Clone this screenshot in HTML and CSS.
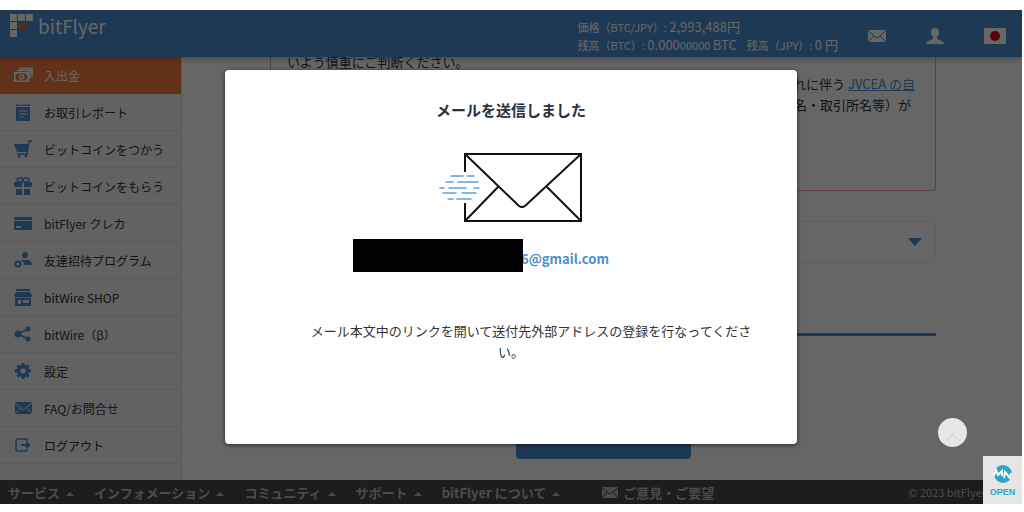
FILE: index.html
```html
<!DOCTYPE html>
<html lang="ja">
<head>
    <meta charset="UTF-8">
    <meta name="viewport" content="width=device-width, initial-scale=1.0">
    <title>bitFlyer</title>
    <link rel="stylesheet" href="styles.css">
</head>
<body>
    <div class="app">
        <header class="header">
            <a class="logo" href="#">
                <svg class="logo-mark" viewBox="0 0 24 24" width="24" height="24">
                    <path fill="#fff" d="M0 0h7v7H0zM8 0h7v7H8zM16 0h7v7h-7zM0 8h7v7H0zM0 16h7v7H0z"/>
                    <circle cx="12" cy="12" r="3.5" fill="#f06a1c"/>
                </svg>
                <span class="logo-text">bitFlyer</span>
            </a>
            <div class="balance">
                <div>価格（BTC/JPY）: <span class="num">2,993,488円</span></div>
                <div>残高（BTC）: <span class="num">0.000</span>00000 <span class="num">BTC</span><span class="jpy">残高（JPY）: <span class="num">0 円</span></span></div>
            </div>
            <nav class="tools">
                <a href="#" aria-label="メール">
                    <svg viewBox="0 0 18 12" width="18" height="12">
                        <rect width="18" height="12" rx="1" fill="#fff"/>
                        <path d="M0 1l9 7 9-7M0 12l6-6M18 12l-6-6" fill="none" stroke="#4a90d0"/>
                    </svg>
                </a>
                <a href="#" aria-label="アカウント">
                    <svg viewBox="0 0 18 16" width="18" height="16">
                        <path fill="#fff" d="M9 0c3 0 4 2 4 5 0 2-1 3-2 4v2l5 2q2 1 2 3H0q0-2 2-3l5-2V9C6 8 5 7 5 5c0-3 1-5 4-5z"/>
                    </svg>
                </a>
                <a href="#" aria-label="日本語">
                    <svg viewBox="0 0 22 16" width="22" height="16">
                        <rect width="22" height="16" fill="#fff"/>
                        <circle cx="11" cy="8" r="5" fill="#e0001b"/>
                    </svg>
                </a>
            </nav>
        </header>

        <div class="body">
            <nav class="sidebar">
                <a class="item active" href="#">
                    <svg class="icon" viewBox="0 0 20 18">
                        <path d="M4 4.500h13v8M6 2.500h13v8" fill="none" stroke="#fff" stroke-width="1.5"/>
                        <rect x="1" y="6" width="15" height="10" fill="#fff"/>
                        <path d="M4 7.500h9q0 1.500 1.500 1.500v4q-1.500 0-1.500 1.500H4q0-1.500-1.500-1.500V9Q4 9 4 7.500z" fill="#f47b43"/>
                        <circle cx="8.500" cy="11" r="2" fill="none" stroke="#fff" stroke-width="1.500"/>
                    </svg>入出金
                </a>
                <a class="item" href="#">
                    <svg class="icon" viewBox="0 0 20 18">
                        <path d="M3 1h1v1h2V1h1v1h2V1h1v1h2V1h1v1h2V1h2v2H3zM3 4h14v14H3z"/>
                        <path d="M6 8h8M6 11h8M6 14h5" stroke="#f4f4f4" fill="none"/>
                    </svg>お取引レポート
                </a>
                <a class="item" href="#">
                    <svg class="icon" viewBox="0 0 20 18">
                        <path d="M1 4h14l-1 8H4z"/>
                        <path d="M19 1h-3l-2 13H4" fill="none" stroke="#4a90d0" stroke-width="1.5"/>
                        <circle cx="6" cy="16" r="1.5"/><circle cx="13" cy="16" r="1.5"/>
                    </svg>ビットコインをつかう
                </a>
                <a class="item" href="#">
                    <svg class="icon" viewBox="0 0 20 18">
                        <path d="M1 6q0-1 1-1h7v5H3q-2 0-2-2zM11 5h7q1 0 1 1v2q0 2-2 2h-6zM3 12h6v6H3zM11 12h6v6h-6z"/>
                        <path d="M10 5Q4 5 4 3t3-2 3 3q0-3 3-3t3 2-6 2z" fill="none" stroke="#4a90d0" stroke-width="1.5"/>
                    </svg>ビットコインをもらう
                </a>
                <a class="item" href="#">
                    <svg class="icon" viewBox="0 0 20 18">
                        <path d="M1 3h18v3H1zM1 7h18v9H1z"/>
                        <path d="M3 13h5" stroke="#f4f4f4" stroke-width="2"/>
                    </svg>bitFlyer クレカ
                </a>
                <a class="item" href="#">
                    <svg class="icon" viewBox="0 0 20 18">
                        <circle cx="12" cy="4" r="3"/>
                        <path d="M9 9h6q4 1 4 5h-8q0-4-3-4z"/>
                        <circle cx="5" cy="13" r="2.5" fill="none" stroke="#4a90d0" stroke-width="2"/>
                    </svg>友達招待プログラム
                </a>
                <a class="item" href="#">
                    <svg class="icon" viewBox="0 0 20 18">
                        <path d="M3 1h14v2H3zM3 4h14l2 4q-1 2-3 1-2 1-3 0-2 1-3 0-2 1-3 0-2 1-3 0-2 1-3-1z"/>
                        <path d="M2 10h16v8H2zM5 12v4h3v-4zM10 12v3h6v-3z" fill-rule="evenodd"/>
                    </svg>bitWire SHOP
                </a>
                <a class="item" href="#">
                    <svg class="icon" viewBox="0 0 20 18">
                        <circle cx="5" cy="9" r="3.5"/><circle cx="15" cy="4" r="2.5"/><circle cx="15" cy="14" r="2.5"/>
                        <path d="M15 4L5 9l10 5" fill="none" stroke="#4a90d0" stroke-width="1.5"/>
                    </svg>bitWire（β）
                </a>
                <a class="item" href="#">
                    <svg class="icon" viewBox="0 0 20 18">
                        <circle cx="10" cy="9" r="4.500" fill="none" stroke="#4a90d0" stroke-width="3.5"/>
                        <path d="M10 1v3M10 14v3M2 9h3M15 9h3M4.300 3.300l2 2M13.700 12.700l2 2M4.300 14.700l2-2M13.700 5.300l2-2" stroke="#4a90d0" stroke-width="3"/>
                    </svg>設定
                </a>
                <a class="item" href="#">
                    <svg class="icon" viewBox="0 0 20 18">
                        <rect x="2" y="3" width="17" height="12"/>
                        <path d="M2 4l8 7 9-7M2 15l5-6M19 15l-5-6" fill="none" stroke="#f4f4f4"/>
                    </svg>FAQ/お問合せ
                </a>
                <a class="item" href="#">
                    <svg class="icon" viewBox="0 0 20 18">
                        <path d="M14 5V4q0-1-1-1H5Q3 3 3 5v8q0 2 2 2h8q1 0 1-1v-1" fill="none" stroke="#4a90d0" stroke-width="1.5"/>
                        <path d="M8 8h5V5l5 4-5 4v-3H8z"/>
                    </svg>ログアウト
                </a>
            </nav>

            <main class="content">
                <section class="notice">
                    <p>いよう慎重にご判断ください。</p>
                    <p class="right">れに伴う <a href="#">JVCEA の自</a></p>
                    <p class="right indent">名・取引所名等）が</p>
                </section>
                <div class="panel">
                    <svg viewBox="0 0 14 8" width="14" height="8"><path d="M0 0h14L7 8z" fill="#4a90d0"/></svg>
                </div>
                <hr class="rule">
                <button class="submit" type="button" aria-label="登録"></button>
            </main>
        </div>

        <footer class="footer">
            <a href="#">サービス<span class="up"></span></a>
            <a href="#">インフォメーション<span class="up"></span></a>
            <a href="#">コミュニティ<span class="up"></span></a>
            <a href="#">サポート<span class="up"></span></a>
            <a href="#">bitFlyer について<span class="up"></span></a>
            <a class="feedback" href="#">
                <svg viewBox="0 0 16 11" width="16" height="11">
                    <rect width="16" height="11" fill="#bbb"/>
                    <path d="M0 1l8 6 8-6M0 11l5-6M16 11l-5-6" fill="none" stroke="#4a4a4a"/>
                </svg>ご意見・ご要望
            </a>
            <small class="copyright">© 2023 bitFlyer</small>
        </footer>

        <div class="overlay">
            <div class="modal" role="dialog" aria-modal="true" aria-labelledby="modal-title">
                <h1 class="modal-title" id="modal-title">メールを送信しました</h1>
                <svg class="mail" viewBox="0 0 144 72" width="144" height="72">
                    <g fill="none" stroke="#111" stroke-width="2">
                        <path d="M26 20V2h116v67H26V51"/>
                        <path d="M26 2l54 52q3 2 6 0l56-52M26 69l33-34M142 69l-34-34"/>
                    </g>
                    <path d="M12 24h12M28 24h7M7 30h7M19 30h20M1 36h4M10 36h17M35 36h5M4 41h13M23 41h14M9 47h5M18 47h14" stroke="#5b9fdb" stroke-width="1.5" stroke-linecap="round"/>
                </svg>
                <p class="address"><span class="mask"></span><span class="domain">6@gmail.com</span></p>
                <p class="message">メール本文中のリンクを開いて送付先外部アドレスの登録を行なってください。</p>
            </div>
        </div>

        <a class="to-top" href="#" aria-label="ページの先頭へ">
            <svg viewBox="0 0 14 10" width="14" height="10"><path d="M1 9l6-7 6 7" fill="none" stroke="#ccc"/></svg>
        </a>
        <a class="mn-badge" href="#">
            <svg viewBox="0 0 20 20" width="20" height="20">
                <circle cx="10" cy="10" r="9" fill="#2fa3c7"/>
                <path d="M1 12l2-6 2 5 4-4v5M11 14l1-6 5 6 1-5" fill="none" stroke="#fff" stroke-width="2"/>
            </svg>
            <span>OPEN</span>
        </a>
    </div>
</body>
</html>
```
FILE: styles.css
```css
* {
    margin: 0;
    padding: 0;
    box-sizing: border-box;
}

body {
    min-height: 100vh;
    padding: 10px 2px 8px 0;
    display: flex;
    flex-direction: column;
    background: #fff;
    color: #333;
    font-family: "Noto Sans CJK JP", "Noto Sans", sans-serif;
    font-size: 13px;
    line-height: 21px;
}

a {
    color: inherit;
    text-decoration: none;
}

svg {
    display: block;
    flex: none;
}

.app {
    position: relative;
    flex: 1;
    display: flex;
    flex-direction: column;
    overflow: hidden;
}

/* header */
.header {
    display: flex;
    height: 47px;
    padding: 0 16px 0 10px;
    background: #4a90d0;
    color: #fff;
    box-shadow: 0 2px 6px rgba(0, 0, 0, 0.3);
    z-index: 1;
}

.logo {
    display: flex;
    gap: 4px;
    padding-top: 4px;
}

.logo-text {
    font-size: 19px;
    line-height: 24px;
}

.balance {
    margin-left: auto;
    padding-top: 8px;
    font-size: 11px;
    line-height: 18px;
    white-space: nowrap;
}

.num {
    font-size: 13px;
}

.jpy {
    margin-left: 10px;
}

.tools {
    display: flex;
    align-items: center;
    gap: 40px;
    margin-left: 30px;
    padding-top: 4px;
}

/* sidebar */
.body {
    flex: 1;
    display: flex;
}

.sidebar {
    flex: none;
    width: 182px;
    background: #f4f4f4;
    border-right: 1px solid #e4e4e4;
}

.item {
    display: flex;
    align-items: center;
    gap: 11px;
    height: 37px;
    padding-left: 13px;
    border-bottom: 1px solid #e4e4e4;
    font-size: 12px;
}

.item.active {
    background: #f47b43;
    border-color: #f47b43;
    color: #fff;
}

.icon {
    width: 20px;
    height: 18px;
    fill: #4a90d0;
}

/* content */
.content {
    flex: 1;
    display: flex;
    flex-direction: column;
    padding: 0 86px 0 88px;
}

.notice {
    height: 134px;
    padding: 0 16px;
    border: 1px solid #f0a0a0;
    border-top: 0;
    border-radius: 0 0 4px 4px;
    color: #2a3042;
}

.notice p {
    line-height: 21px;
    margin-top: -6px;
}

.notice .right {
    margin-top: 0;
    padding-right: 4px;
    text-align: right;
}

.notice .indent {
    padding-right: 8px;
}

.notice p:first-child {
    margin-bottom: 1px;
}

.notice a {
    color: #4a90d0;
    text-decoration: underline;
}

.panel {
    display: flex;
    align-items: center;
    justify-content: flex-end;
    height: 42px;
    margin-top: 30px;
    padding-right: 13px;
    border: 1px solid #eee;
    border-radius: 4px;
}

.rule {
    margin-top: 70px;
    border: 0;
    border-top: 3px solid #4a90d0;
}

.submit {
    align-self: center;
    width: 175px;
    height: 40px;
    margin: 83px 0 21px;
    border: 0;
    border-radius: 4px;
    background: #4a90d0;
}

/* footer */
.footer {
    display: flex;
    align-items: center;
    gap: 20px;
    height: 24px;
    padding-left: 8px;
    background: #4a4a4a;
    color: #bbb;
    font-size: 13px;
    font-weight: bold;
    white-space: nowrap;
}

.footer a {
    display: flex;
    align-items: center;
    gap: 6px;
}

.up {
    margin-top: 4px;
    border: 4px solid transparent;
    border-top: 0;
    border-bottom-color: #bbb;
}

.footer .feedback {
    gap: 5px;
    margin-left: 22px;
}

.copyright {
    margin-left: auto;
    padding-right: 36px;
    font-size: 11px;
    font-weight: normal;
}

/* modal */
.overlay {
    position: absolute;
    inset: 0;
    display: flex;
    align-items: center;
    justify-content: center;
    background: rgba(0, 0, 0, 0.6);
    z-index: 2;
}

.modal {
    display: flex;
    flex-direction: column;
    align-items: center;
    width: 56%;
    min-height: 374px;
    padding: 29px 40px;
    border-radius: 4px;
    background: #fff;
    box-shadow: 0 1px 4px rgba(0, 0, 0, 0.6);
}

.modal-title {
    color: #2a3042;
    font-size: 15px;
    line-height: 22px;
}

.mail {
    margin-top: 31px;
}

.address {
    display: flex;
    align-items: center;
    margin-top: 15px;
    margin-right: 60px;
}

.mask {
    width: 170px;
    height: 33px;
    background: #000;
    z-index: 1;
}

.domain {
    margin-left: -2px;
    padding-top: 6px;
    color: #4a90d0;
    font-weight: bold;
}

.message {
    margin-top: 48px;
    text-align: center;
    text-indent: 40px;
}

/* floating buttons */
.to-top {
    position: absolute;
    right: 55px;
    bottom: 57px;
    display: flex;
    justify-content: center;
    width: 29px;
    height: 29px;
    padding-top: 14px;
    border-radius: 50%;
    background: #e6e6e6;
    z-index: 3;
}

.mn-badge {
    position: absolute;
    right: 0;
    bottom: 0;
    display: flex;
    flex-direction: column;
    align-items: center;
    width: 39px;
    height: 48px;
    padding-top: 8px;
    background: #e6e6e6;
    color: #2fa3c7;
    font-family: "Liberation Sans", sans-serif;
    font-size: 9px;
    font-weight: bold;
    line-height: 16px;
    z-index: 3;
}
```
